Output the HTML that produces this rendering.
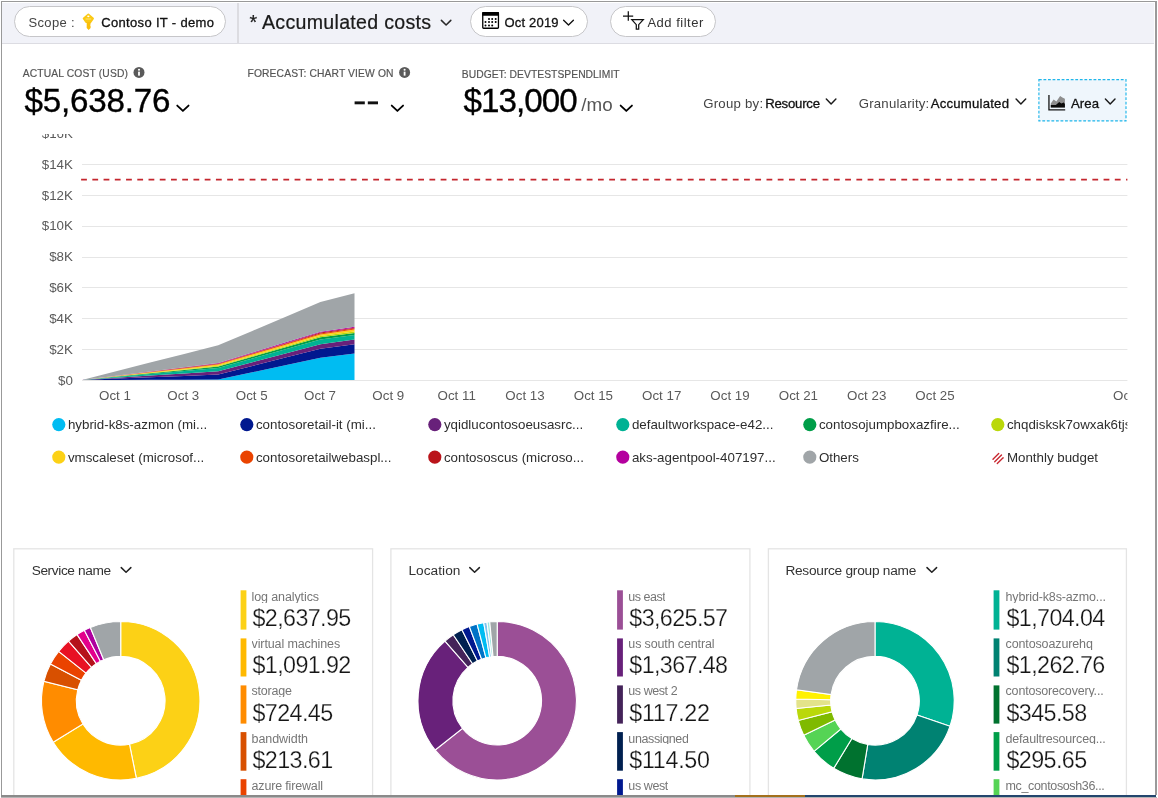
<!DOCTYPE html>
<html><head><meta charset="utf-8"><title>Cost analysis</title>
<style>
html,body{margin:0;padding:0;background:#fff;}
body{width:1158px;height:798px;overflow:hidden;position:relative;font-family:"Liberation Sans", Arial, sans-serif;}
.t{position:absolute;white-space:pre;line-height:1;font-family:"Liberation Sans", Arial, sans-serif;}
.tx{position:absolute;left:0;top:0;width:1158px;height:798px;will-change:transform;}
.bar{position:absolute;left:2px;top:2.5px;width:1152px;height:40.5px;background:#f1f2f8;border-bottom:1px solid #dcdce2;}
.pill{position:absolute;top:5.9px;height:29.3px;border:1px solid #c6c6c9;border-radius:16px;background:#fff;}
.vdiv{position:absolute;left:237.3px;top:3px;width:1.5px;height:40px;background:#dcdce1;}
.card{position:absolute;top:548px;height:260px;border:1px solid #e1e1e1;background:#fff;box-sizing:border-box;}
.area{position:absolute;left:1038.5px;top:79px;width:87px;height:42px;border:1px dashed #25b5e9;background:#eff6fc;box-sizing:content-box;}
svg{position:absolute;left:0;top:0;will-change:transform;}
svg text{font-family:"Liberation Sans", Arial, sans-serif;font-size:13.33px;fill:#5a5a5a;}
svg .lg text{fill:#2e2e2e;}
.frame{position:absolute;left:1px;top:1px;width:1156px;height:794px;border:1px solid #999;border-right:2px solid #9a9a9a;border-bottom:0;box-sizing:border-box;pointer-events:none;}
.bot1{position:absolute;left:1px;top:795px;height:1.5px;}
</style></head><body>
<div class="bar"></div><div class="vdiv"></div>
<div class="pill" style="left:14px;width:210px"></div>
<div class="pill" style="left:470px;width:115.5px"></div>
<div class="pill" style="left:610px;width:103.5px"></div>
<svg width="1158" height="798" viewBox="0 0 1158 798">
<defs><clipPath id="cc"><rect x="0" y="134" width="1127.4" height="350"/></clipPath></defs>
<rect x="1038.9" y="79.6" width="87.1" height="41.3" fill="#eff6fc" stroke="#1fb6ea" stroke-width="1.15" stroke-dasharray="2.8 1.75"/>
<g fill="#fff" stroke="#e4e4e4" stroke-width="1.3"><rect x="13.8" y="548.8" width="358.8" height="260"/><rect x="390.9" y="548.8" width="359" height="260"/><rect x="768.4" y="548.8" width="358" height="260"/></g>
<g clip-path="url(#cc)">
<line x1="82" x2="1130" y1="380.5" y2="380.5" stroke="#e6e6e6" stroke-width="1"/><line x1="82" x2="1130" y1="349.5" y2="349.5" stroke="#e6e6e6" stroke-width="1"/><line x1="82" x2="1130" y1="318.5" y2="318.5" stroke="#e6e6e6" stroke-width="1"/><line x1="82" x2="1130" y1="287.5" y2="287.5" stroke="#e6e6e6" stroke-width="1"/><line x1="82" x2="1130" y1="257.5" y2="257.5" stroke="#e6e6e6" stroke-width="1"/><line x1="82" x2="1130" y1="226.5" y2="226.5" stroke="#e6e6e6" stroke-width="1"/><line x1="82" x2="1130" y1="195.5" y2="195.5" stroke="#e6e6e6" stroke-width="1"/><line x1="82" x2="1130" y1="164.5" y2="164.5" stroke="#e6e6e6" stroke-width="1"/><line x1="82" x2="1130" y1="133.5" y2="133.5" stroke="#e6e6e6" stroke-width="1"/>
<g><text x="72.9" y="384.6" text-anchor="end">$0</text><text x="72.9" y="353.7" text-anchor="end">$2K</text><text x="72.9" y="322.9" text-anchor="end">$4K</text><text x="72.9" y="292.0" text-anchor="end">$6K</text><text x="72.9" y="261.2" text-anchor="end">$8K</text><text x="72.9" y="230.3" text-anchor="end">$10K</text><text x="72.9" y="199.5" text-anchor="end">$12K</text><text x="72.9" y="168.6" text-anchor="end">$14K</text><text x="72.9" y="137.7" text-anchor="end">$16K</text></g>
<g><text x="115.0" y="400.3" text-anchor="middle">Oct 1</text><text x="183.3" y="400.3" text-anchor="middle">Oct 3</text><text x="251.7" y="400.3" text-anchor="middle">Oct 5</text><text x="320.0" y="400.3" text-anchor="middle">Oct 7</text><text x="388.3" y="400.3" text-anchor="middle">Oct 9</text><text x="456.7" y="400.3" text-anchor="middle">Oct 11</text><text x="525.0" y="400.3" text-anchor="middle">Oct 13</text><text x="593.4" y="400.3" text-anchor="middle">Oct 15</text><text x="661.7" y="400.3" text-anchor="middle">Oct 17</text><text x="730.0" y="400.3" text-anchor="middle">Oct 19</text><text x="798.4" y="400.3" text-anchor="middle">Oct 21</text><text x="866.7" y="400.3" text-anchor="middle">Oct 23</text><text x="935.0" y="400.3" text-anchor="middle">Oct 25</text><text x="1132.7" y="400.3" text-anchor="middle">Oct 31</text></g>
<polygon fill="#00BCF2" points="82.0,380.0 116.1,379.9 150.1,379.8 184.2,379.7 218.2,379.6 252.3,372.3 286.4,365.1 320.4,357.8 354.5,353.4 354.5,380.0 320.4,380.0 286.4,380.0 252.3,380.0 218.2,380.0 184.2,380.0 150.1,380.0 116.1,380.0 82.0,380.0"/><polygon fill="#00188F" points="82.0,380.0 116.1,378.6 150.1,377.2 184.2,375.9 218.2,374.5 252.3,365.9 286.4,357.3 320.4,348.7 354.5,344.3 354.5,353.4 320.4,357.8 286.4,365.1 252.3,372.3 218.2,379.6 184.2,379.7 150.1,379.8 116.1,379.9 82.0,380.0"/><polygon fill="#68217A" points="82.0,380.0 116.1,377.8 150.1,375.6 184.2,373.5 218.2,371.3 252.3,362.3 286.4,353.3 320.4,344.3 354.5,339.5 354.5,344.3 320.4,348.7 286.4,357.3 252.3,365.9 218.2,374.5 184.2,375.9 150.1,377.2 116.1,378.6 82.0,380.0"/><polygon fill="#00B294" points="82.0,380.0 116.1,377.0 150.1,374.0 184.2,371.0 218.2,368.0 252.3,358.5 286.4,349.0 320.4,339.5 354.5,335.0 354.5,339.5 320.4,344.3 286.4,353.3 252.3,362.3 218.2,371.3 184.2,373.5 150.1,375.6 116.1,377.8 82.0,380.0"/><polygon fill="#009E49" points="82.0,380.0 116.1,376.6 150.1,373.3 184.2,370.0 218.2,366.6 252.3,356.8 286.4,347.1 320.4,337.3 354.5,332.9 354.5,335.0 320.4,339.5 286.4,349.0 252.3,358.5 218.2,368.0 184.2,371.0 150.1,374.0 116.1,377.0 82.0,380.0"/><polygon fill="#BAD80A" points="82.0,380.0 116.1,376.4 150.1,372.9 184.2,369.4 218.2,365.8 252.3,355.9 286.4,345.9 320.4,336.0 354.5,331.6 354.5,332.9 320.4,337.3 286.4,347.1 252.3,356.8 218.2,366.6 184.2,370.0 150.1,373.3 116.1,376.6 82.0,380.0"/><polygon fill="#FCD116" points="82.0,380.0 116.1,376.1 150.1,372.3 184.2,368.5 218.2,364.6 252.3,354.5 286.4,344.5 320.4,334.4 354.5,329.6 354.5,331.6 320.4,336.0 286.4,345.9 252.3,355.9 218.2,365.8 184.2,369.4 150.1,372.9 116.1,376.4 82.0,380.0"/><polygon fill="#EA4300" points="82.0,380.0 116.1,376.0 150.1,372.0 184.2,368.0 218.2,364.0 252.3,353.8 286.4,343.6 320.4,333.4 354.5,328.6 354.5,329.6 320.4,334.4 286.4,344.5 252.3,354.5 218.2,364.6 184.2,368.5 150.1,372.3 116.1,376.1 82.0,380.0"/><polygon fill="#BA141A" points="82.0,380.0 116.1,375.9 150.1,371.8 184.2,367.6 218.2,363.5 252.3,353.2 286.4,342.9 320.4,332.6 354.5,327.8 354.5,328.6 320.4,333.4 286.4,343.6 252.3,353.8 218.2,364.0 184.2,368.0 150.1,372.0 116.1,376.0 82.0,380.0"/><polygon fill="#B4009E" points="82.0,380.0 116.1,375.8 150.1,371.5 184.2,367.2 218.2,363.0 252.3,352.6 286.4,342.1 320.4,331.7 354.5,326.8 354.5,327.8 320.4,332.6 286.4,342.9 252.3,353.2 218.2,363.5 184.2,367.6 150.1,371.8 116.1,375.9 82.0,380.0"/><polygon fill="#A0A5A8" points="82.0,380.0 116.1,371.3 150.1,362.6 184.2,354.0 218.2,345.3 252.3,330.9 286.4,316.4 320.4,302.0 354.5,293.2 354.5,326.8 320.4,331.7 286.4,342.1 252.3,352.6 218.2,363.0 184.2,367.2 150.1,371.5 116.1,375.8 82.0,380.0"/>
<line x1="81.1" x2="1130" y1="179.65" y2="179.65" stroke="#C4262E" stroke-width="1.85" stroke-dasharray="5.8,5.436"/>
<g class="lg"><circle cx="58.8" cy="424.55" r="6.6" fill="#00BCF2"/><text x="67.9" y="429.3">hybrid-k8s-azmon (mi...</text><circle cx="246.8" cy="424.55" r="6.6" fill="#00188F"/><text x="255.9" y="429.3">contosoretail-it (mi...</text><circle cx="434.8" cy="424.55" r="6.6" fill="#68217A"/><text x="443.9" y="429.3">yqidlucontosoeusasrc...</text><circle cx="622.8" cy="424.55" r="6.6" fill="#00B294"/><text x="631.9" y="429.3">defaultworkspace-e42...</text><circle cx="809.8" cy="424.55" r="6.6" fill="#009E49"/><text x="818.9" y="429.3">contosojumpboxazfire...</text><circle cx="997.8" cy="424.55" r="6.6" fill="#BAD80A"/><text x="1006.9" y="429.3">chqdisksk7owxak6tjs...</text><circle cx="58.8" cy="457.05" r="6.6" fill="#FCD116"/><text x="67.9" y="461.8">vmscaleset (microsof...</text><circle cx="246.8" cy="457.05" r="6.6" fill="#EA4300"/><text x="255.9" y="461.8">contosoretailwebaspl...</text><circle cx="434.8" cy="457.05" r="6.6" fill="#BA141A"/><text x="443.9" y="461.8">contososcus (microso...</text><circle cx="622.8" cy="457.05" r="6.6" fill="#B4009E"/><text x="631.9" y="461.8">aks-agentpool-407197...</text><circle cx="809.8" cy="457.05" r="6.6" fill="#A0A5A8"/><text x="818.9" y="461.8">Others</text><g stroke="#C8262F" stroke-width="1.35" stroke-linecap="round"><line x1="993" y1="459.2" x2="998.7" y2="453.5"/><line x1="994.7" y1="461.8" x2="1001.5" y2="455"/><line x1="997.3" y1="463.5" x2="1003.1" y2="457.7"/></g><text x="1006.9" y="461.8">Monthly budget</text></g>
</g>
<path d="M120.70 621.45A79.25 79.25 0 0 1 136.36 778.39L129.47 744.18A44.35 44.35 0 0 0 120.70 656.35Z" fill="#FCD116" stroke="#fff" stroke-width="1.1"/>
<path d="M136.36 778.39A79.25 79.25 0 0 1 53.20 742.23L82.93 723.94A44.35 44.35 0 0 0 129.47 744.18Z" fill="#FFB900" stroke="#fff" stroke-width="1.1"/>
<path d="M53.20 742.23A79.25 79.25 0 0 1 43.87 681.26L77.71 689.82A44.35 44.35 0 0 0 82.93 723.94Z" fill="#FF8C00" stroke="#fff" stroke-width="1.1"/>
<path d="M43.87 681.26A79.25 79.25 0 0 1 50.47 663.98L81.40 680.15A44.35 44.35 0 0 0 77.71 689.82Z" fill="#D85000" stroke="#fff" stroke-width="1.1"/>
<path d="M50.47 663.98A79.25 79.25 0 0 1 58.68 651.37L85.99 673.09A44.35 44.35 0 0 0 81.40 680.15Z" fill="#EA4300" stroke="#fff" stroke-width="1.1"/>
<path d="M58.68 651.37A79.25 79.25 0 0 1 68.50 641.07L91.49 667.33A44.35 44.35 0 0 0 85.99 673.09Z" fill="#E81123" stroke="#fff" stroke-width="1.1"/>
<path d="M68.50 641.07A79.25 79.25 0 0 1 77.07 634.54L96.29 663.67A44.35 44.35 0 0 0 91.49 667.33Z" fill="#B5121B" stroke="#fff" stroke-width="1.1"/>
<path d="M77.07 634.54A79.25 79.25 0 0 1 84.35 630.28L100.36 661.29A44.35 44.35 0 0 0 96.29 663.67Z" fill="#E3008C" stroke="#fff" stroke-width="1.1"/>
<path d="M84.35 630.28A79.25 79.25 0 0 1 90.37 627.48L103.73 659.73A44.35 44.35 0 0 0 100.36 661.29Z" fill="#AE009E" stroke="#fff" stroke-width="1.1"/>
<path d="M90.37 627.48A79.25 79.25 0 0 1 120.70 621.45L120.70 656.35A44.35 44.35 0 0 0 103.73 659.73Z" fill="#A0A5A8" stroke="#fff" stroke-width="1.1"/>
<path d="M497.20 621.45A79.25 79.25 0 1 1 435.18 750.03L462.49 728.31A44.35 44.35 0 1 0 497.20 656.35Z" fill="#9B4F96" stroke="#fff" stroke-width="1.1"/>
<path d="M435.18 750.03A79.25 79.25 0 0 1 445.00 641.07L467.99 667.33A44.35 44.35 0 0 0 462.49 728.31Z" fill="#68217A" stroke="#fff" stroke-width="1.1"/>
<path d="M445.00 641.07A79.25 79.25 0 0 1 453.23 634.77L472.59 663.80A44.35 44.35 0 0 0 467.99 667.33Z" fill="#442359" stroke="#fff" stroke-width="1.1"/>
<path d="M453.23 634.77A79.25 79.25 0 0 1 461.96 629.71L477.48 660.98A44.35 44.35 0 0 0 472.59 663.80Z" fill="#002050" stroke="#fff" stroke-width="1.1"/>
<path d="M461.96 629.71A79.25 79.25 0 0 1 469.32 626.52L481.60 659.19A44.35 44.35 0 0 0 477.48 660.98Z" fill="#00188F" stroke="#fff" stroke-width="1.1"/>
<path d="M469.32 626.52A79.25 79.25 0 0 1 477.09 624.04L485.95 657.80A44.35 44.35 0 0 0 481.60 659.19Z" fill="#0072C6" stroke="#fff" stroke-width="1.1"/>
<path d="M477.09 624.04A79.25 79.25 0 0 1 483.71 622.61L489.65 657.00A44.35 44.35 0 0 0 485.95 657.80Z" fill="#00BCF2" stroke="#fff" stroke-width="1.1"/>
<path d="M483.71 622.61A79.25 79.25 0 0 1 486.99 622.11L491.49 656.72A44.35 44.35 0 0 0 489.65 657.00Z" fill="#7FC4EF" stroke="#fff" stroke-width="1.1"/>
<path d="M486.99 622.11A79.25 79.25 0 0 1 489.74 621.80L493.03 656.55A44.35 44.35 0 0 0 491.49 656.72Z" fill="#9DE7E0" stroke="#fff" stroke-width="1.1"/>
<path d="M489.74 621.80A79.25 79.25 0 0 1 497.20 621.45L497.20 656.35A44.35 44.35 0 0 0 493.03 656.55Z" fill="#A0A5A8" stroke="#fff" stroke-width="1.1"/>
<path d="M875.00 621.45A79.25 79.25 0 0 1 950.02 726.24L916.98 714.99A44.35 44.35 0 0 0 875.00 656.35Z" fill="#00B294" stroke="#fff" stroke-width="1.1"/>
<path d="M950.02 726.24A79.25 79.25 0 0 1 862.06 778.89L867.76 744.45A44.35 44.35 0 0 0 916.98 714.99Z" fill="#008272" stroke="#fff" stroke-width="1.1"/>
<path d="M862.06 778.89A79.25 79.25 0 0 1 833.71 768.34L851.89 738.55A44.35 44.35 0 0 0 867.76 744.45Z" fill="#00722F" stroke="#fff" stroke-width="1.1"/>
<path d="M833.71 768.34A79.25 79.25 0 0 1 814.03 751.32L840.88 729.03A44.35 44.35 0 0 0 851.89 738.55Z" fill="#009E49" stroke="#fff" stroke-width="1.1"/>
<path d="M814.03 751.32A79.25 79.25 0 0 1 803.71 735.32L835.10 720.07A44.35 44.35 0 0 0 840.88 729.03Z" fill="#55D455" stroke="#fff" stroke-width="1.1"/>
<path d="M803.71 735.32A79.25 79.25 0 0 1 798.24 720.41L832.04 711.73A44.35 44.35 0 0 0 835.10 720.07Z" fill="#7FBA00" stroke="#fff" stroke-width="1.1"/>
<path d="M798.24 720.41A79.25 79.25 0 0 1 796.13 708.43L830.86 705.03A44.35 44.35 0 0 0 832.04 711.73Z" fill="#BAD80A" stroke="#fff" stroke-width="1.1"/>
<path d="M796.13 708.43A79.25 79.25 0 0 1 795.77 699.04L830.66 699.77A44.35 44.35 0 0 0 830.86 705.03Z" fill="#E3E38A" stroke="#fff" stroke-width="1.1"/>
<path d="M795.77 699.04A79.25 79.25 0 0 1 796.52 689.67L831.08 694.53A44.35 44.35 0 0 0 830.66 699.77Z" fill="#FFF100" stroke="#fff" stroke-width="1.1"/>
<path d="M796.52 689.67A79.25 79.25 0 0 1 875.00 621.45L875.00 656.35A44.35 44.35 0 0 0 831.08 694.53Z" fill="#A0A5A8" stroke="#fff" stroke-width="1.1"/>
<rect x="240.6" y="590.3" width="5.8" height="39.3" fill="#FCD116"/><rect x="240.6" y="638.4" width="5.8" height="38.1" fill="#FFB900"/><rect x="240.6" y="685.4" width="5.8" height="38.2" fill="#FF8C00"/><rect x="240.6" y="732.1" width="5.8" height="38.6" fill="#D85000"/><rect x="240.6" y="779.2" width="5.8" height="30" fill="#EA4300"/><rect x="617.1" y="590.3" width="5.8" height="39.3" fill="#9B4F96"/><rect x="617.1" y="638.4" width="5.8" height="38.1" fill="#68217A"/><rect x="617.1" y="685.4" width="5.8" height="38.2" fill="#442359"/><rect x="617.1" y="732.1" width="5.8" height="38.6" fill="#002050"/><rect x="617.1" y="779.2" width="5.8" height="30" fill="#00188F"/><rect x="993.6" y="590.3" width="5.8" height="39.3" fill="#00B294"/><rect x="993.6" y="638.4" width="5.8" height="38.1" fill="#008272"/><rect x="993.6" y="685.4" width="5.8" height="38.2" fill="#00722F"/><rect x="993.6" y="732.1" width="5.8" height="38.6" fill="#009E49"/><rect x="993.6" y="779.2" width="5.8" height="30" fill="#55D455"/>
<polyline points="441.40,20.40 446.10,25.00 450.80,20.40" fill="none" stroke="#2a2a2a" stroke-width="1.55" stroke-linecap="round" stroke-linejoin="round"/><polyline points="563.60,20.30 568.50,25.10 573.40,20.30" fill="none" stroke="#111" stroke-width="1.35" stroke-linecap="round" stroke-linejoin="round"/><polyline points="177.25,105.60 182.90,110.95 188.55,105.60" fill="none" stroke="#000" stroke-width="1.85" stroke-linecap="round" stroke-linejoin="round"/><polyline points="391.75,105.60 397.40,110.95 403.05,105.60" fill="none" stroke="#000" stroke-width="1.85" stroke-linecap="round" stroke-linejoin="round"/><polyline points="620.65,105.60 626.30,110.95 631.95,105.60" fill="none" stroke="#000" stroke-width="1.85" stroke-linecap="round" stroke-linejoin="round"/><polyline points="826.30,99.10 831.10,103.90 835.90,99.10" fill="none" stroke="#1a1a1a" stroke-width="1.45" stroke-linecap="round" stroke-linejoin="round"/><polyline points="1016.10,99.10 1020.90,103.90 1025.70,99.10" fill="none" stroke="#1a1a1a" stroke-width="1.45" stroke-linecap="round" stroke-linejoin="round"/><polyline points="1105.40,99.10 1110.20,103.90 1115.00,99.10" fill="none" stroke="#1a1a1a" stroke-width="1.45" stroke-linecap="round" stroke-linejoin="round"/><polyline points="121.26,567.60 126.06,572.30 130.86,567.60" fill="none" stroke="#222" stroke-width="1.5" stroke-linecap="round" stroke-linejoin="round"/><polyline points="469.80,567.60 474.60,572.30 479.40,567.60" fill="none" stroke="#222" stroke-width="1.5" stroke-linecap="round" stroke-linejoin="round"/><polyline points="927.00,567.60 931.80,572.30 936.60,567.60" fill="none" stroke="#222" stroke-width="1.5" stroke-linecap="round" stroke-linejoin="round"/>
<circle cx="139.0" cy="72.45" r="5.5" fill="#5a5a5a"/><rect x="138.1" y="71.65" width="1.8" height="4" fill="#fff"/><circle cx="139.0" cy="69.75" r="1.05" fill="#fff"/><circle cx="404.6" cy="72.45" r="5.5" fill="#5a5a5a"/><rect x="403.70000000000005" y="71.65" width="1.8" height="4" fill="#fff"/><circle cx="404.6" cy="69.75" r="1.05" fill="#fff"/>
<!-- key icon -->
<g><path d="M88.35 14.5L93 18.5L90.6 22H86.1L83.7 18.5Z" fill="#FBC914" stroke="#FBC914" stroke-width="1.9" stroke-linejoin="round"/><path d="M86.7 22h3.9v2.4l-0.7 0.7 0.7 0.7v2.3l-1.95 1.9-1.95-1.9z" fill="#F9BE0B"/><rect x="85.3" y="18.2" width="6.1" height="1.5" rx="0.7" fill="#FDDC55"/><ellipse cx="88.35" cy="16.3" rx="1.15" ry="0.85" fill="#fff"/></g>
<!-- calendar icon -->
<g><rect x="482.75" y="12.65" width="15.7" height="15.6" rx="0.8" fill="#fff" stroke="#000" stroke-width="1.3"/><rect x="482.2" y="12.1" width="16.8" height="3.6" rx="0.6" fill="#000"/>
<g fill="#000"><circle cx="489" cy="18.9" r="1.0"/><circle cx="492.2" cy="18.9" r="1.0"/><circle cx="495.7" cy="18.9" r="1.0"/><circle cx="485.5" cy="22.1" r="1.0"/><circle cx="489" cy="22.1" r="1.0"/><circle cx="492.2" cy="22.1" r="1.0"/><circle cx="495.7" cy="22.1" r="1.0"/><circle cx="485.5" cy="25.6" r="1.0"/><circle cx="489" cy="25.6" r="1.0"/><circle cx="492.2" cy="25.6" r="1.0"/></g></g>
<!-- add filter icon -->
<g fill="none" stroke="#111" stroke-width="1.25"><path d="M623 16h10.2M628.3 11.2v9.6"/><path d="M631.8 19.7H643.3L638.7 24.7V29.1H636.3V24.7Z" stroke-linejoin="miter"/></g>
<!-- area icon -->
<g><path d="M1048.95 95.1V109.85H1065.2" fill="none" stroke="#151515" stroke-width="1.3"/><path d="M1050.8 107.4V103.6L1053.6 99.6L1056.4 101.4L1060.1 96L1062.4 97.6L1064.9 98.7V107.4Z" fill="#8e8e8e"/><path d="M1050.8 107.5V104.9L1055.9 105L1059.2 101.9L1061.4 103.6L1063.7 102.6L1064.9 104V107.5Z" fill="#0a0a0a"/></g>
<!-- dashes -->
<rect x="354.6" y="101.4" width="10.2" height="2.9" fill="#111"/><rect x="367.8" y="101.4" width="10.2" height="2.9" fill="#111"/>
</svg>
<div class="tx"><span class="t" style="left:28.52px;top:16.00px;font-size:13px;font-weight:400;color:#444;letter-spacing:0.328px">Scope :</span><span class="t" style="left:101.22px;top:16.00px;font-size:13px;font-weight:400;color:#111;letter-spacing:0.334px;-webkit-text-stroke:0.3px #111">Contoso IT - demo</span><span class="t" style="left:249.42px;top:12.51px;font-size:19.6px;font-weight:400;color:#1a1a1a;letter-spacing:0.290px;-webkit-text-stroke:0.22px #1a1a1a">* Accumulated costs</span><span class="t" style="left:504.52px;top:15.80px;font-size:13px;font-weight:400;color:#111;letter-spacing:0.185px;-webkit-text-stroke:0.3px #111">Oct 2019</span><span class="t" style="left:647.42px;top:15.80px;font-size:13px;font-weight:400;color:#333;letter-spacing:0.505px">Add filter</span><span class="t" style="left:22.68px;top:69.38px;font-size:10.3px;font-weight:400;color:#555;letter-spacing:0.141px;-webkit-text-stroke:0.18px #555">ACTUAL COST (USD)</span><span class="t" style="left:24.41px;top:83.50px;font-size:33.2px;font-weight:400;color:#000;letter-spacing:-0.184px;-webkit-text-stroke:0.35px #000">$5,638.76</span><span class="t" style="left:247.48px;top:69.38px;font-size:10.3px;font-weight:400;color:#555;letter-spacing:0.127px;-webkit-text-stroke:0.18px #555">FORECAST: CHART VIEW ON</span><span class="t" style="left:461.78px;top:69.68px;font-size:10.3px;font-weight:400;color:#555;letter-spacing:0.044px;-webkit-text-stroke:0.18px #555">BUDGET: DEVTESTSPENDLIMIT</span><span class="t" style="left:463.41px;top:83.50px;font-size:33.2px;font-weight:400;color:#000;letter-spacing:-0.931px;-webkit-text-stroke:0.35px #000">$13,000</span><span class="t" style="left:581.27px;top:95.69px;font-size:18.8px;font-weight:400;color:#555;letter-spacing:0.000px">/mo</span><span class="t" style="left:703.21px;top:96.63px;font-size:13.2px;font-weight:400;color:#444;letter-spacing:0.245px">Group by:</span><span class="t" style="left:765.21px;top:96.63px;font-size:13.2px;font-weight:400;color:#111;letter-spacing:-0.224px;-webkit-text-stroke:0.3px #111">Resource</span><span class="t" style="left:858.71px;top:96.63px;font-size:13.2px;font-weight:400;color:#444;letter-spacing:0.219px">Granularity:</span><span class="t" style="left:930.71px;top:96.63px;font-size:13.2px;font-weight:400;color:#111;letter-spacing:0.205px;-webkit-text-stroke:0.3px #111">Accumulated</span><span class="t" style="left:1071.01px;top:96.63px;font-size:13.2px;font-weight:400;color:#111;letter-spacing:0.042px;-webkit-text-stroke:0.3px #111">Area</span><span class="t" style="left:31.68px;top:563.60px;font-size:13.7px;font-weight:400;color:#333;letter-spacing:-0.395px">Service name</span><span class="t" style="left:408.48px;top:563.60px;font-size:13.7px;font-weight:400;color:#333;letter-spacing:0.028px">Location</span><span class="t" style="left:785.38px;top:563.60px;font-size:13.7px;font-weight:400;color:#333;letter-spacing:-0.250px">Resource group name</span><span class="t" style="left:251.55px;top:590.97px;font-size:12.5px;font-weight:400;color:#767676;letter-spacing:-0.108px;overflow:hidden;height:11.88px">log analytics</span><span class="t" style="left:252.50px;top:607.13px;font-size:23.3px;font-weight:400;color:#151515;letter-spacing:-0.608px;-webkit-text-stroke:0.25px #fff">$2,637.95</span><span class="t" style="left:251.55px;top:638.17px;font-size:12.5px;font-weight:400;color:#767676;letter-spacing:-0.115px;overflow:hidden;height:11.88px">virtual machines</span><span class="t" style="left:252.50px;top:654.33px;font-size:23.3px;font-weight:400;color:#151515;letter-spacing:-0.608px;-webkit-text-stroke:0.25px #fff">$1,091.92</span><span class="t" style="left:251.55px;top:685.37px;font-size:12.5px;font-weight:400;color:#767676;letter-spacing:-0.201px;overflow:hidden;height:11.88px">storage</span><span class="t" style="left:252.50px;top:701.53px;font-size:23.3px;font-weight:400;color:#151515;letter-spacing:-0.604px;-webkit-text-stroke:0.25px #fff">$724.45</span><span class="t" style="left:251.55px;top:732.57px;font-size:12.5px;font-weight:400;color:#767676;letter-spacing:-0.062px;overflow:hidden;height:11.88px">bandwidth</span><span class="t" style="left:252.50px;top:748.73px;font-size:23.3px;font-weight:400;color:#151515;letter-spacing:-0.604px;-webkit-text-stroke:0.25px #fff">$213.61</span><span class="t" style="left:251.55px;top:779.77px;font-size:12.5px;font-weight:400;color:#767676;letter-spacing:-0.165px;overflow:hidden;height:11.88px">azure firewall</span><span class="t" style="left:628.35px;top:590.97px;font-size:12.5px;font-weight:400;color:#767676;letter-spacing:-0.469px;overflow:hidden;height:11.88px">us east</span><span class="t" style="left:629.30px;top:607.13px;font-size:23.3px;font-weight:400;color:#151515;letter-spacing:-0.608px;-webkit-text-stroke:0.25px #fff">$3,625.57</span><span class="t" style="left:628.35px;top:638.17px;font-size:12.5px;font-weight:400;color:#767676;letter-spacing:-0.137px;overflow:hidden;height:11.88px">us south central</span><span class="t" style="left:629.30px;top:654.33px;font-size:23.3px;font-weight:400;color:#151515;letter-spacing:-0.608px;-webkit-text-stroke:0.25px #fff">$1,367.48</span><span class="t" style="left:628.35px;top:685.37px;font-size:12.5px;font-weight:400;color:#767676;letter-spacing:-0.439px;overflow:hidden;height:11.88px">us west 2</span><span class="t" style="left:629.30px;top:701.53px;font-size:23.3px;font-weight:400;color:#151515;letter-spacing:-0.315px;-webkit-text-stroke:0.25px #fff">$117.22</span><span class="t" style="left:628.35px;top:732.57px;font-size:12.5px;font-weight:400;color:#767676;letter-spacing:-0.384px;overflow:hidden;height:11.88px">unassigned</span><span class="t" style="left:629.30px;top:748.73px;font-size:23.3px;font-weight:400;color:#151515;letter-spacing:-0.315px;-webkit-text-stroke:0.25px #fff">$114.50</span><span class="t" style="left:628.35px;top:779.77px;font-size:12.5px;font-weight:400;color:#767676;letter-spacing:-0.415px;overflow:hidden;height:11.88px">us west</span><span class="t" style="left:1005.55px;top:590.97px;font-size:12.5px;font-weight:400;color:#767676;letter-spacing:-0.142px;overflow:hidden;height:11.88px">hybrid-k8s-azmo...</span><span class="t" style="left:1006.50px;top:607.13px;font-size:23.3px;font-weight:400;color:#151515;letter-spacing:-0.608px;-webkit-text-stroke:0.25px #fff">$1,704.04</span><span class="t" style="left:1005.55px;top:638.17px;font-size:12.5px;font-weight:400;color:#767676;letter-spacing:-0.127px;overflow:hidden;height:11.88px">contosoazurehq</span><span class="t" style="left:1006.50px;top:654.33px;font-size:23.3px;font-weight:400;color:#151515;letter-spacing:-0.608px;-webkit-text-stroke:0.25px #fff">$1,262.76</span><span class="t" style="left:1005.55px;top:685.37px;font-size:12.5px;font-weight:400;color:#767676;letter-spacing:-0.183px;overflow:hidden;height:11.88px">contosorecovery...</span><span class="t" style="left:1006.50px;top:701.53px;font-size:23.3px;font-weight:400;color:#151515;letter-spacing:-0.604px;-webkit-text-stroke:0.25px #fff">$345.58</span><span class="t" style="left:1005.55px;top:732.57px;font-size:12.5px;font-weight:400;color:#767676;letter-spacing:-0.186px;overflow:hidden;height:11.88px">defaultresourceg...</span><span class="t" style="left:1006.50px;top:748.73px;font-size:23.3px;font-weight:400;color:#151515;letter-spacing:-0.604px;-webkit-text-stroke:0.25px #fff">$295.65</span><span class="t" style="left:1005.55px;top:779.77px;font-size:12.5px;font-weight:400;color:#767676;letter-spacing:-0.358px;overflow:hidden;height:13.18px">mc_contososh36...</span></div>
<div class="frame"></div>
<div class="bot1" style="width:735px;background:#8a8a8a"></div>
<div class="bot1" style="left:735px;width:70px;background:#a3701c"></div>
<div class="bot1" style="left:805px;width:351px;background:#23466e"></div>
<div style="position:absolute;left:1px;top:796.5px;width:1156px;height:1px;background:#b5b5b5"></div>
</body></html>
